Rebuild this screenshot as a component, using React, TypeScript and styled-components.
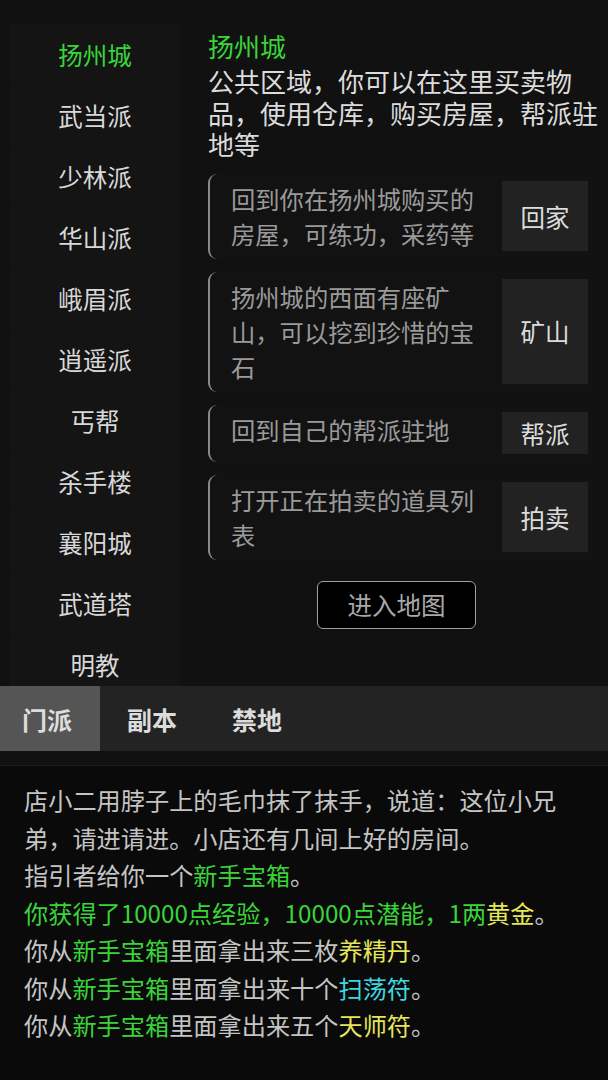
import styled, { createGlobalStyle } from "styled-components"

const GlobalStyle = createGlobalStyle`
  html, body {
    margin: 0;
    padding: 0;
    background: #0a0a0a;
    font-family: "Noto Sans CJK SC", "Noto Sans", sans-serif;
  }
`

const places = ["扬州城", "武当派", "少林派", "华山派", "峨眉派", "逍遥派", "丐帮", "杀手楼", "襄阳城", "武道塔", "明教"]

const actions = [
  { text: "回到你在扬州城购买的房屋，可练功，采药等", button: "回家" },
  { text: "扬州城的西面有座矿山，可以挖到珍惜的宝石", button: "矿山" },
  { text: "回到自己的帮派驻地", button: "帮派" },
  { text: "打开正在拍卖的道具列表", button: "拍卖" },
]

const tabs = ["门派", "副本", "禁地"]

const App = () => {
  return (
    <Page>
      <GlobalStyle />
      <Top>
        <Sidebar>
          {places.map((p, i) => (
            <PlaceItem key={p} active={i === 0}>{p}</PlaceItem>
          ))}
        </Sidebar>
        <Panel>
          <Title>扬州城</Title>
          <Desc>公共区域，你可以在这里买卖物品，使用仓库，购买房屋，帮派驻地等</Desc>
          <CardList>
            {actions.map(a => (
              <Card key={a.button}>
                <CardText>{a.text}</CardText>
                <CardButton>{a.button}</CardButton>
              </Card>
            ))}
          </CardList>
          <MapRow>
            <MapButton>进入地图</MapButton>
          </MapRow>
        </Panel>
      </Top>
      <TabBar>
        {tabs.map((t, i) => (
          <Tab key={t} active={i === 0}>{t}</Tab>
        ))}
      </TabBar>
      <Divider />
      <Log>
        <Line>店小二用脖子上的毛巾抹了抹手，说道：这位小兄弟，请进请进。小店还有几间上好的房间。</Line>
        <Line>指引者给你一个<Hl color="#3ad43a">新手宝箱</Hl>。</Line>
        <Line><Hl color="#3ad43a">你获得了10000点经验，10000点潜能，1两</Hl><Hl color="#e6e65a">黄金</Hl>。</Line>
        <Line>你从<Hl color="#3ad43a">新手宝箱</Hl>里面拿出来三枚<Hl color="#e6e65a">养精丹</Hl>。</Line>
        <Line>你从<Hl color="#3ad43a">新手宝箱</Hl>里面拿出来十个<Hl color="#3fd8e0">扫荡符</Hl>。</Line>
        <Line>你从<Hl color="#3ad43a">新手宝箱</Hl>里面拿出来五个<Hl color="#e6e65a">天师符</Hl>。</Line>
      </Log>
    </Page>
  )
}

const Page = styled.div`
  width: 608px;
  height: 1080px;
  overflow: hidden;
  background: #0a0a0a;
`
const Top = styled.div`
  height: 686px;
  overflow: hidden;
  background: #111111;
  display: flex;
`
const Sidebar = styled.div`
  width: 170px;
  margin-left: 10px;
  padding-top: 24px;
  display: flex;
  flex-direction: column;
  gap: 1px;
  flex-shrink: 0;
`
const PlaceItem = styled.div<{ active?: boolean }>`
  height: 60px;
  flex-shrink: 0;
  display: flex;
  align-items: center;
  justify-content: center;
  background: #141414;
  font-size: 24.5px;
  color: ${({ active }) => (active ? "#3ad43a" : "#d8d8d8")};
`
const Panel = styled.div`
  width: 392px;
  margin-left: 28px;
  padding-top: 30px;
  display: flex;
  flex-direction: column;
`
const Title = styled.div`
  font-size: 26px;
  line-height: 32px;
  color: #3ad43a;
`
const Desc = styled.div`
  margin-top: 3px;
  font-size: 26px;
  line-height: 31.5px;
  color: #dcdcdc;
`
const CardList = styled.div`
  margin-top: 14px;
  display: flex;
  flex-direction: column;
  gap: 13px;
  width: 388px;
`
const Card = styled.div`
  display: flex;
  gap: 20px;
  padding: 7.5px 8px 7.5px 21px;
  border-left: 2px solid #8a8a8a;
  border-radius: 9px 0 0 9px;
  background: #121212;
`
const CardText = styled.div`
  flex: 1;
  font-size: 24.3px;
  line-height: 35px;
  color: #9a9a9a;
`
const CardButton = styled.div`
  width: 86px;
  min-height: 42px;
  flex-shrink: 0;
  display: flex;
  align-items: center;
  justify-content: center;
  background: #222222;
  font-size: 24.5px;
  color: #dcdcdc;
`
const MapRow = styled.div`
  display: flex;
  justify-content: center;
  width: 377px;
  margin-top: 21px;
`
const MapButton = styled.div`
  width: 157px;
  height: 46px;
  display: flex;
  align-items: center;
  justify-content: center;
  border: 1px solid #a0a0a0;
  border-radius: 6px;
  background: #000;
  font-size: 24.5px;
  color: #a8a8a8;
`
const TabBar = styled.div`
  height: 65px;
  display: flex;
  gap: 5px;
  background: #232323;
`
const Tab = styled.div<{ active?: boolean }>`
  padding: 0 28px 0 22px;
  display: flex;
  align-items: center;
  font-size: 25px;
  font-weight: bold;
  color: #dcdcdc;
  background: ${({ active }) => (active ? "#555555" : "transparent")};
`
const Divider = styled.div`
  height: 14px;
  background: #111111;
  border-bottom: 1px solid #1e1e1e;
`
const Log = styled.div`
  padding: 15px 24px 0 24px;
  font-size: 24.2px;
  line-height: 37.5px;
  color: #c4c4c4;
`
const Line = styled.div``

const Hl = styled.span<{ color: string }>`
  color: ${({ color }) => color};
`

export default App
